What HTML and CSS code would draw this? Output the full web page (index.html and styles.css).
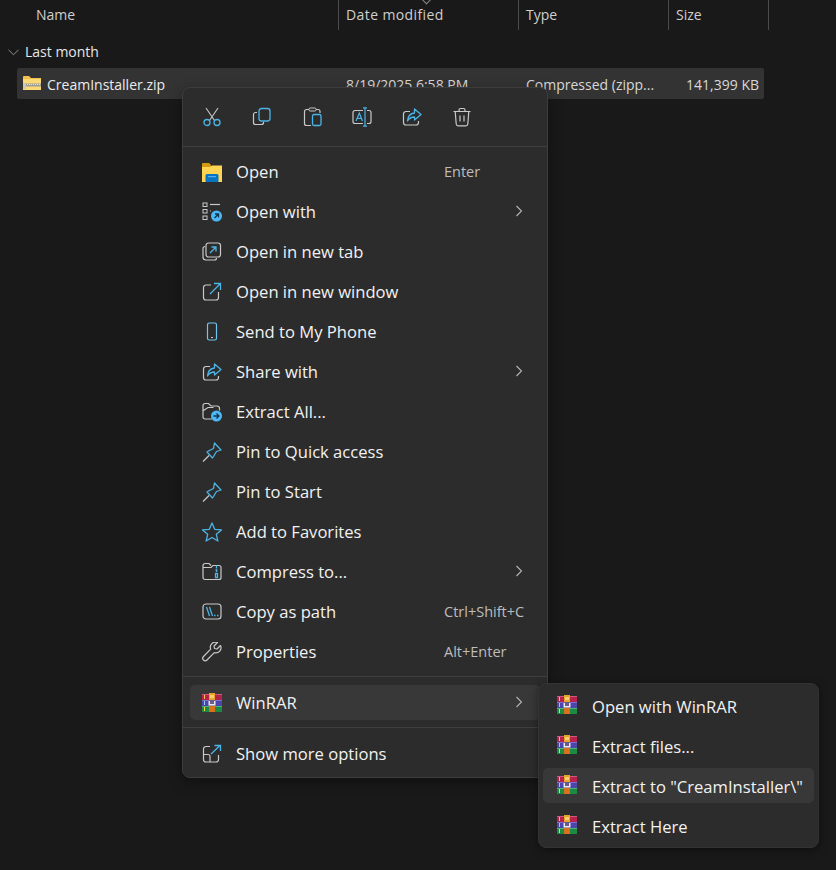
FILE: index.html
```html
<!DOCTYPE html>
<html lang="en">
<head>
<meta charset="utf-8">
<title>Context menu</title>
<link rel="stylesheet" href="styles.css">
</head>
<body>
<svg class="defs" width="0" height="0" aria-hidden="true">
  <symbol id="i-rar" viewBox="0 0 20 20">
    <rect x="0" y="1" width="20" height="6" fill="#b5234d"/>
    <rect x="0" y="7" width="20" height="6" fill="#4b45ad"/>
    <rect x="0" y="13" width="20" height="6" fill="#1d8a44"/>
    <rect x="0" y="1" width="20" height="1" fill="#d8557a"/>
    <rect x="0" y="7" width="20" height="1" fill="#7671d0"/>
    <rect x="0" y="13" width="20" height="1" fill="#4bb26f"/>
    <rect x="2" y="2" width="1" height="4" fill="#f2c94c"/>
    <rect x="2" y="8" width="1" height="4" fill="#9fc6f0"/>
    <rect x="2" y="14" width="1" height="4" fill="#f2d84c"/>
    <rect x="7" y="0" width="6" height="7" fill="#e8a52c"/>
    <rect x="7" y="13" width="6" height="6" fill="#d8701c"/>
    <rect x="8" y="2" width="4" height="3" fill="#f7cf6a"/>
    <rect x="7" y="7" width="6" height="6" fill="#6b5a8c"/>
    <path d="M6.500 8v4.500h7V8h-1.500v3h-4V8z" fill="#e9e9ee"/>
  </symbol>
  <symbol id="i-cut" viewBox="0 0 20 20" fill="none">
    <path d="M4 1l8.500 12.500M16 1L7.500 13.500" stroke="#c9c9c9" stroke-width="1.100"/>
    <circle cx="5" cy="15.500" r="3" stroke="#4db4e6" stroke-width="1.300"/>
    <circle cx="15" cy="15.500" r="3" stroke="#4db4e6" stroke-width="1.300"/>
  </symbol>
  <symbol id="i-copy" viewBox="0 0 20 20" fill="none">
    <path d="M5 5.500H3.500A2 2 0 0 0 1.500 7.500v8a2 2 0 0 0 2 2h6a2 2 0 0 0 2-2V15" stroke="#c9c9c9" stroke-width="1.200"/>
    <rect x="7" y="1.500" width="11" height="12.500" rx="2.500" stroke="#4db4e6" stroke-width="1.300"/>
  </symbol>
  <symbol id="i-paste" viewBox="0 0 20 20" fill="none">
    <path d="M7 2.500H4.500a2 2 0 0 0-2 2v12a2 2 0 0 0 2 2H9M14 2.500h2a2 2 0 0 1 2 2V6" stroke="#c9c9c9" stroke-width="1.200"/>
    <rect x="7" y="1" width="7" height="3" rx="1.200" stroke="#c9c9c9"/>
    <rect x="10.500" y="7.500" width="8.500" height="11" rx="1.500" stroke="#4db4e6" stroke-width="1.300"/>
  </symbol>
  <symbol id="i-rename" viewBox="0 0 20 20" fill="none">
    <path d="M11 3.500H3a2 2 0 0 0-2 2v9a2 2 0 0 0 2 2h8M15 3.500h2a2 2 0 0 1 2 2v9a2 2 0 0 1-2 2h-2" stroke="#c9c9c9" stroke-width="1.200"/>
    <path d="M13 .8v18.400M11 .8h4M11 19.200h4M4 14L7.300 6 10.500 14M5.200 11.300h4.200" stroke="#4db4e6" stroke-width="1.200"/>
  </symbol>
  <symbol id="i-share" viewBox="0 0 20 20" fill="none">
    <path d="M8 4.500H4a2.500 2.500 0 0 0-2.500 2.500v8.500A2.500 2.500 0 0 0 4 18h10a2.500 2.500 0 0 0 2.500-2.500V14" stroke="#c9c9c9" stroke-width="1.200"/>
    <path d="M12.500 2l6.500 5.500-6.500 5.500V10c-3.500 0-5.500 1.500-7 4 .3-4.500 2.500-7.500 7-8z" stroke="#4db4e6" stroke-width="1.300" stroke-linejoin="round"/>
  </symbol>
  <symbol id="i-trash" viewBox="0 0 20 20" fill="none" stroke="#c9c9c9" stroke-width="1.200">
    <path d="M1.500 4.500h17M7 4.500V3a1.500 1.500 0 0 1 1.500-1.500h3A1.500 1.500 0 0 1 13 3v1.500M3.200 4.500l1 12.500a2 2 0 0 0 2 1.800h7.600a2 2 0 0 0 2-1.800l1-12.500M8 8.500v6M12 8.500v6"/>
  </symbol>
  <symbol id="i-open" viewBox="0 0 20 20">
    <path d="M0 2a1 1 0 0 1 1-1h6l2 2v2H0z" fill="#d49a12"/>
    <path d="M0 5h8l2-1.500h10V20H0z" fill="#ffd452"/>
    <path d="M3.500 13.500a1.500 1.500 0 0 1 1.500-1.500h10a1.500 1.500 0 0 1 1.500 1.500V20h-13z" fill="#0a74c4"/>
    <rect x="6" y="14" width="8" height="1.200" fill="#4db4f0"/>
  </symbol>
  <symbol id="i-openwith" viewBox="0 0 20 20" fill="none">
    <rect x="1" y="1" width="4" height="3.500" stroke="#c9c9c9"/>
    <rect x="1" y="7.500" width="4" height="3.500" stroke="#c9c9c9"/>
    <rect x="1" y="14" width="4" height="3.500" stroke="#c9c9c9"/>
    <path d="M8 2.500h10" stroke="#c9c9c9" stroke-width="1.200"/>
    <path d="M8 9h1" stroke="#c9c9c9"/>
    <circle cx="14.500" cy="14" r="5.500" fill="#4cb8f5"/>
    <path d="M12.500 16l4-4M13 12h3.500v3.500" stroke="#16324a" stroke-width="1.300"/>
  </symbol>
  <symbol id="i-newtab" viewBox="0 0 20 20" fill="none">
    <path d="M3 4.500a2 2 0 0 0-2 2V15a3 3 0 0 0 3 3h8.500a2 2 0 0 0 2-2" stroke="#c9c9c9" stroke-width="1.200"/>
    <rect x="4" y="1" width="14.500" height="14" rx="2.500" stroke="#c9c9c9" stroke-width="1.200"/>
    <path d="M8 11l6-6M9.500 5H14v4.500" stroke="#4db4e6" stroke-width="1.300"/>
  </symbol>
  <symbol id="i-newwin" viewBox="0 0 20 20" fill="none">
    <path d="M9 3H4a2.500 2.500 0 0 0-2.500 2.500v10A2.500 2.500 0 0 0 4 18h10a2.500 2.500 0 0 0 2.500-2.500V10" stroke="#c9c9c9" stroke-width="1.200"/>
    <path d="M8 12L18 2M12 1.500h6.500V8" stroke="#4db4e6" stroke-width="1.300"/>
  </symbol>
  <symbol id="i-phone" viewBox="0 0 20 20" fill="none">
    <rect x="5.500" y="1" width="9" height="17" rx="1.800" stroke="#6cc6ee" stroke-width="1.200"/>
    <path d="M9 15.500h2" stroke="#c9c9c9" stroke-width="1.200"/>
  </symbol>
  <symbol id="i-extract" viewBox="0 0 20 20" fill="none">
    <path d="M10 17H3a2 2 0 0 1-2-2V3.500a2 2 0 0 1 2-2h3.500L9 4h6a2.500 2.500 0 0 1 2.500 2.500v2M1.500 8.500L6 5.500h5.500" stroke="#c9c9c9" stroke-width="1.200"/>
    <circle cx="14.500" cy="14" r="5.500" fill="#4cb8f5"/>
    <path d="M11.500 14h5.500M14.500 11.500L17 14l-2.500 2.500" stroke="#16324a" stroke-width="1.300"/>
  </symbol>
  <symbol id="i-pin" viewBox="0 0 20 20" fill="none">
    <path d="M12.500 1l6.500 7-4.500 1.500-3 5-1 1.500L5 10l1.500-1 5-2.500z" stroke="#4db4e6" stroke-width="1.300" stroke-linejoin="round"/>
    <path d="M7 13.500L1 19.500" stroke="#c9c9c9" stroke-width="1.200"/>
  </symbol>
  <symbol id="i-star" viewBox="0 0 20 20" fill="none">
    <path d="M10 1l2.700 6.300 6.800.6-5.200 4.400 1.600 6.700L10 15.500 4.100 19l1.600-6.700L.5 7.900l6.800-.6z" stroke="#4db4e6" stroke-width="1.300" stroke-linejoin="round"/>
  </symbol>
  <symbol id="i-compress" viewBox="0 0 20 20" fill="none">
    <path d="M1 5.500h8l2-2h6a2 2 0 0 1 2 2v10a2 2 0 0 1-2 2H3a2 2 0 0 1-2-2V3.500a2 2 0 0 1 2-2h4L9 3.500" stroke="#c9c9c9" stroke-width="1.200"/>
    <path d="M14.500 3.500v3M13.500 8h2M14.500 8v2M13.500 11.500h2v4h-2z" stroke="#4db4e6" stroke-width="1.300"/>
  </symbol>
  <symbol id="i-path" viewBox="0 0 20 20" fill="none">
    <rect x="1" y="2" width="18" height="15" rx="3" stroke="#c9c9c9" stroke-width="1.200"/>
    <path d="M4.500 5l3 9M7.500 5l3 9" stroke="#4db4e6" stroke-width="1.300"/>
    <path d="M12 13.500h1.500M15 13.500h1.500" stroke="#4db4e6" stroke-width="1.500"/>
  </symbol>
  <symbol id="i-wrench" viewBox="0 0 20 20" fill="none">
    <path d="M18.500 3.500L15 7l-2.500-.5L12 4l3.500-3.500a5.200 5.200 0 0 0-6.800 6.700L1.500 14.500a2.400 2.400 0 0 0 3.500 3.500l7.300-7.300a5.200 5.200 0 0 0 6.200-7.200z" stroke="#c9c9c9" stroke-width="1.200" stroke-linejoin="round"/>
  </symbol>
  <symbol id="i-more" viewBox="0 0 20 20" fill="none">
    <path d="M8 2.500H4A2.500 2.500 0 0 0 1.500 5v10.500A2.500 2.500 0 0 0 4 18h10a2.500 2.500 0 0 0 2.500-2.500V11M1.500 10.500H6a2 2 0 0 1 2 2V18" stroke="#c9c9c9" stroke-width="1.200"/>
    <path d="M9 10l9-8.500M12.500 1.500h6V7" stroke="#4db4e6" stroke-width="1.300"/>
  </symbol>
  <symbol id="i-chev" viewBox="0 0 10 12" fill="none">
    <path d="M2.500 1l5 5-5 5" stroke="#b4b4b4" stroke-width="1.100"/>
  </symbol>
</svg>

<main class="explorer">
  <header class="cols">
    <div class="col col-name">Name</div>
    <div class="col col-date">Date modified<span class="sort"></span></div>
    <div class="col col-type">Type</div>
    <div class="col col-size">Size</div>
  </header>
  <div class="group">
    <svg class="group-chev" viewBox="0 0 12 7" fill="none"><path d="M.5.500L6 6 11.500.500" stroke="#9a9a9a"/></svg>
    <span>Last month</span>
  </div>
  <div class="file">
    <svg class="file-ico" viewBox="0 0 18 14">
      <path d="M0 1a1 1 0 0 1 1-1h5l2 2h10v12H0z" fill="#f5c04a"/>
      <rect x="0" y="3" width="18" height="11" fill="#fbd976"/>
      <rect x="3" y="7.500" width="15" height="3" fill="#9d9d92"/>
      <rect x="0" y="7" width="3" height="6" fill="#c9c7b8"/>
      <path d="M4 8.500h13" stroke="#e8e8e0" stroke-dasharray="1 1"/>
    </svg>
    <span class="file-name">CreamInstaller.zip</span>
    <span class="file-date">8/19/2025 6:58 PM</span>
    <span class="file-type">Compressed (zipp...</span>
    <span class="file-size">141,399 KB</span>
  </div>

  <nav class="menu">
    <div class="tools">
      <svg class="tool"><use href="#i-cut"/></svg>
      <svg class="tool"><use href="#i-copy"/></svg>
      <svg class="tool"><use href="#i-paste"/></svg>
      <svg class="tool"><use href="#i-rename"/></svg>
      <svg class="tool"><use href="#i-share"/></svg>
      <svg class="tool"><use href="#i-trash"/></svg>
    </div>
    <ul class="list">
      <li class="item"><svg class="ico"><use href="#i-open"/></svg><span>Open</span><span class="key">Enter</span></li>
      <li class="item"><svg class="ico"><use href="#i-openwith"/></svg><span>Open with</span><span></span><svg class="chev"><use href="#i-chev"/></svg></li>
      <li class="item"><svg class="ico"><use href="#i-newtab"/></svg><span>Open in new tab</span></li>
      <li class="item"><svg class="ico"><use href="#i-newwin"/></svg><span>Open in new window</span></li>
      <li class="item"><svg class="ico"><use href="#i-phone"/></svg><span>Send to My Phone</span></li>
      <li class="item"><svg class="ico"><use href="#i-share"/></svg><span>Share with</span><span></span><svg class="chev"><use href="#i-chev"/></svg></li>
      <li class="item"><svg class="ico"><use href="#i-extract"/></svg><span>Extract All...</span></li>
      <li class="item"><svg class="ico"><use href="#i-pin"/></svg><span>Pin to Quick access</span></li>
      <li class="item"><svg class="ico"><use href="#i-pin"/></svg><span>Pin to Start</span></li>
      <li class="item"><svg class="ico"><use href="#i-star"/></svg><span>Add to Favorites</span></li>
      <li class="item"><svg class="ico"><use href="#i-compress"/></svg><span>Compress to...</span><span></span><svg class="chev"><use href="#i-chev"/></svg></li>
      <li class="item"><svg class="ico"><use href="#i-path"/></svg><span>Copy as path</span><span class="key">Ctrl+Shift+C</span></li>
      <li class="item"><svg class="ico"><use href="#i-wrench"/></svg><span>Properties</span><span class="key">Alt+Enter</span></li>
    </ul>
    <div class="sep sep-a"></div>
    <div class="item item-hot"><svg class="ico"><use href="#i-rar"/></svg><span>WinRAR</span><span></span><svg class="chev"><use href="#i-chev"/></svg></div>
    <div class="sep sep-b"></div>
    <div class="item item-more"><svg class="ico"><use href="#i-more"/></svg><span>Show more options</span></div>
  </nav>

  <nav class="submenu">
    <div class="sub"><svg class="ico"><use href="#i-rar"/></svg><span>Open with WinRAR</span></div>
    <div class="sub"><svg class="ico"><use href="#i-rar"/></svg><span>Extract files...</span></div>
    <div class="sub sub-hot"><svg class="ico"><use href="#i-rar"/></svg><span>Extract to "CreamInstaller\"</span></div>
    <div class="sub"><svg class="ico"><use href="#i-rar"/></svg><span>Extract Here</span></div>
  </nav>
</main>
</body>
</html>
```

FILE: styles.css
```css
* { box-sizing: border-box; }
html, body { margin: 0; height: 100%; background: #191919; }
body {
  overflow: hidden;
  font-family: "Open Sans", "Noto Sans", "Liberation Sans", sans-serif;
  color: #f2f2f2;
}
.defs { position: absolute; }
.explorer { position: relative; height: 870px; }

.cols { display: flex; height: 30px; font-size: 14px; color: #cfcfcf; }
.col { display: flex; align-items: center; border-right: 1px solid #4b4b4b; padding-left: 7px; padding-bottom: 1px; position: relative; }
.col-name { width: 339px; padding-left: 36px; }
.col-date { width: 180px; letter-spacing: .4px; }
.col-type { width: 150px; }
.col-size { width: 100px; }
.sort {
  position: absolute; left: 84px; top: -4px; width: 7px; height: 7px;
  border-right: 1px solid #8a8a8a; border-bottom: 1px solid #8a8a8a; transform: rotate(45deg);
}

.group { display: flex; align-items: center; height: 20px; margin: 11px 0 7px; padding-left: 8px; font-size: 14px; color: #e6e6e6; gap: 6px; }
.group-chev { width: 11px; height: 7px; margin-top: 2px; }

.file {
  display: flex; align-items: center; height: 31px; width: 747px; margin-left: 17px;
  background: #333; border-radius: 2px; font-size: 14px; color: #ececec; white-space: nowrap;
}
.file > span { flex: none; padding-top: 2px; }
.file-ico { width: 18px; height: 14px; margin: -2px 6px 0 6px; flex: none; }
.file-name { width: 299px; }
.file-date { width: 180px; color: #d8d8d8; }
.file-type { width: 150px; color: #d8d8d8; }
.file-size { width: 83px; text-align: right; color: #d8d8d8; }

.menu {
  position: absolute; left: 182px; top: 87px; width: 366px; height: 691px;
  background: #2c2c2c; border: 1px solid #3d3d3d; border-radius: 8px;
  box-shadow: 0 4px 14px rgba(0, 0, 0, .35);
  font-size: 16.600px; white-space: nowrap;
}
.tools {
  display: flex; align-items: center; height: 59px; padding-left: 19px; gap: 30px;
  border-bottom: 1px solid #3f3f3f;
}
.tool { width: 20px; height: 20px; flex: none; }
.list { list-style: none; margin: 5px 0 0; padding: 0; }
.item {
  display: grid; grid-template-columns: 20px 222px 70px 10px; column-gap: 0;
  align-items: center; height: 40px; padding-left: 19px;
}
.item > span { padding-bottom: 2px; }
.item > span:first-of-type { padding-left: 14px; grid-column: 2; }
.ico { width: 20px; height: 20px; flex: none; }
.key { font-size: 14.500px; color: #bdbdbd; }
.chev { width: 10px; height: 12px; grid-column: 4; margin-top: -2px; }
.sep { height: 1px; background: #3f3f3f; }
.sep-a { margin-top: 4px; }
.item-hot {
  height: 35px; margin: 8px 7px 7px; padding-left: 12px; background: #383838; border-radius: 5px;
}
.item-hot > span { padding-bottom: 0; }
.sep-b { margin-bottom: 6px; }

.submenu {
  position: absolute; left: 538px; top: 683px; width: 281px; height: 165px; padding: 2px 4px;
  background: #2c2c2c; border-radius: 8px; border: 1px solid #333;
  box-shadow: 0 2px 10px rgba(0, 0, 0, .4);
  font-size: 16.600px; white-space: nowrap;
}
.sub { display: flex; align-items: center; height: 40px; padding-left: 14px; gap: 15px; }
.sub .ico { margin-top: -3px; }
.sub-hot { background: #383838; border-radius: 5px; height: 35px; margin: 2px 0 3px; }
.sub-hot > span { padding-top: 2px; }
.sub-hot .ico { margin-top: -1px; }
```
